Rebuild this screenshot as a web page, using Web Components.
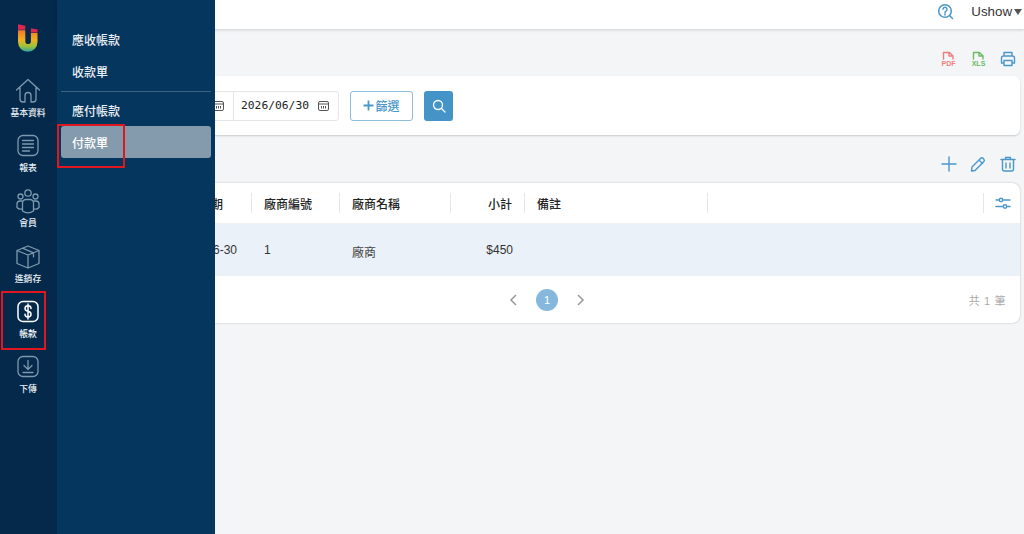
<!DOCTYPE html>
<html lang="zh-Hant"><head><meta charset="utf-8"><title>付款單</title>
<style>
html,body{margin:0;height:100%;overflow:hidden;background:#f3f5f7;font-family:"Liberation Sans","Noto Sans CJK TC",sans-serif}
</style></head><body>
<app-shell>
  <side-rail slot="rail"></side-rail>
  <sub-menu slot="sub"></sub-menu>
  <top-bar slot="main"></top-bar>
  <page-body slot="main"></page-body>
</app-shell>
<script>
const I={
 home:'<path d="M2.500 13 14 2.500 25.500 13M6 10.500V22a3 3 0 0 0 3 3h2v-6.500a3 3 0 0 1 6 0V25h2a3 3 0 0 0 3-3V10.500"/>',
 report:'<rect x="4" y="3.500" width="20" height="20" rx="5"/><path d="M8.500 8.500h11M8.500 12h11M8.500 15.500h11M8.500 19h7"/>',
 member:'<circle cx="14" cy="6" r="3.200"/><circle cx="6.500" cy="9.500" r="2.500"/><circle cx="21.500" cy="9.500" r="2.500"/><path d="M8.500 24v-8a3.500 3.500 0 0 1 3.500-3.500h4a3.500 3.500 0 0 1 3.500 3.500v8a10 10 0 0 1-11 0zM8 14H5.500A3 3 0 0 0 3 17v3.500a5 5 0 0 0 5 1.500M20 14h2.500a3 3 0 0 1 2.500 3v3.500a5 5 0 0 1-5 1.500"/>',
 box:'<path d="M14 3 25 7.500v13L14 25 3 20.500v-13zM3 7.500 14 12l11-4.500M14 12v13M8.500 5.200l11 4.600v4"/>',
 money:'<rect x="4" y="3.500" width="20" height="20" rx="5"/><path d="M17 10.500c0-1.500-1.300-2.700-3-2.700s-3 1.200-3 2.700 1.300 2.400 3 2.800 3 1.400 3 2.900-1.300 2.700-3 2.700-3-1.200-3-2.700M14 6v15"/>',
 down:'<rect x="4" y="3.500" width="20" height="20" rx="5"/><path d="M14 7.500V16M10 12.500l4 4 4-4M9 19.500h10"/>'
};
function def(name,css,html,init){
  customElements.define(name,class extends HTMLElement{
    constructor(){super();const s=this.attachShadow({mode:'open'});
      s.innerHTML='<style>'+css+'</style>'+(typeof html==='function'?html(this):html);}
    connectedCallback(){init&&init(this)}
  });
}
def('app-shell',`
:host{display:block;position:relative;width:1024px;height:534px;overflow:hidden}
.wrap{display:flex;height:100%}
.main{flex:1;min-width:0;display:flex;flex-direction:column}
`,`<div class="wrap"><slot name="rail"></slot><div class="main"><slot name="main"></slot></div></div><slot name="sub"></slot>`);

def('rail-item',`
:host{display:flex;flex-direction:column;align-items:center;height:55.200px;color:#e8eef3;font-size:8.800px;line-height:12px;font-weight:500}
svg{width:28px;height:28px;fill:none;stroke:#7e99ae;stroke-width:1.300;stroke-linecap:round;stroke-linejoin:round;margin-bottom:2px;flex:none}
:host([active]) svg{stroke:#fff;stroke-width:1.500}
:host([active]){color:#fff}
`,h=>`<svg viewBox="0 0 28 28">${I[h.getAttribute('icon')]}</svg><slot></slot>`);

def('side-rail',`
:host{display:flex;flex-direction:column;align-items:center;flex:none;width:57px;height:534px;background:#04294b;box-sizing:border-box;padding:24px 1px 0 0;position:relative}
.logo{width:22px;height:28px;margin-bottom:25px;flex:none}
.mark{position:absolute;left:1px;top:291px;width:45px;height:59px;box-sizing:border-box;border:2px solid #e0171f}
`,`<svg class="logo" viewBox="0 0 22 28"><defs><linearGradient id="g" x1="0" y1="0" x2="0" y2="1"><stop offset="0" stop-color="#f07a2c"/><stop offset=".45" stop-color="#f2b01e"/><stop offset=".75" stop-color="#9cc23a"/><stop offset="1" stop-color="#2aa6a0"/></linearGradient></defs>
<path fill="url(#g)" d="M1 6.300h7.300v11a2.800 2.800 0 0 0 5.600 0V9h6.600v9a9.750 9.750 0 0 1-19.500 0z"/><path fill="#e0264f" d="M1 .3 8.300 1.800V5.700H1zM13.900 4.300l6.600 1.200v3H13.900z"/></svg>
<rail-item icon="home">基本資料</rail-item>
<rail-item icon="report">報表</rail-item>
<rail-item icon="member">會員</rail-item>
<rail-item icon="box">進銷存</rail-item>
<rail-item icon="money" active>帳款</rail-item>
<rail-item icon="down">下傳</rail-item>
<div class="mark"></div>`);

def('menu-link',`
:host{display:flex;align-items:center;height:32px;box-sizing:border-box;padding-left:11px;border-radius:3px;color:#e8eef3;font-size:12px;font-weight:500}
:host([active]){background:#849bae;color:#fff}
`,`<slot></slot>`);

def('sub-menu',`
:host{position:absolute;left:57px;top:0;width:158px;height:534px;background:#05365d;box-sizing:border-box;padding:23px 4px 0 4px;display:flex;flex-direction:column}
hr{border:0;border-top:1px solid #3d6283;margin:4px 0 2px;height:0;width:100%}
.mark{position:absolute;left:0;top:124px;width:68px;height:44px;box-sizing:border-box;border:2px solid #e0171f}
`,`<menu-link>應收帳款</menu-link><menu-link>收款單</menu-link><hr><menu-link>應付帳款</menu-link><menu-link active>付款單</menu-link><div class="mark"></div>`);

def('top-bar',`
:host{display:flex;align-items:center;justify-content:flex-end;height:29px;flex:none;box-sizing:border-box;background:#fff;box-shadow:0 1px 3px rgba(0,0,0,.16);padding:0 2px 6px 0;font-size:13.300px;color:#333;position:relative}
svg{width:17px;height:17px;fill:none;stroke:#4a97c9;stroke-width:1.500;margin-right:17px}
i{display:inline-block;width:0;height:0;border:4px solid transparent;border-top:6px solid #555;border-bottom:0;margin-left:2px}
`,`<svg viewBox="0 0 17 17"><circle cx="8" cy="8" r="6.300"/><path d="M6 6.300a2 2 0 1 1 3 1.800c-.7.400-1 .8-1 1.600M8 11v1M12.500 12.500l3 3" stroke-linecap="round"/></svg><span>Ushow</span><i></i>`);

def('tool-icon',`
:host{display:inline-flex;width:18px;height:18px;flex:none}
svg{width:100%;height:100%;fill:none;overflow:visible;stroke:var(--c,#4a97c9);stroke-width:1.400;stroke-linecap:round;stroke-linejoin:round}
text{font:700 7px "Liberation Sans",sans-serif;fill:var(--c);stroke:none}
`,h=>{const k=h.getAttribute('k');const p={
 pdf:'<path d="M4.500 9V2.500h6L14 6v3M10 2.500V6h4"/><text x="9.500" y="16.200" text-anchor="middle">PDF</text>',
 xls:'<path d="M4.500 9V2.500h6L14 6v3M10 2.500V6h4"/><text x="9.500" y="16.200" text-anchor="middle">XLS</text>',
 print:'<path d="M5 6V2.500h8V6M4.500 13H2.500V8a2 2 0 0 1 2-2h9a2 2 0 0 1 2 2v5h-2M5 10.500h8v5H5z"/>',
 plus:'<path d="M9 2v14M2 9h14"/>',
 pen:'<path d="M3 12 11.500 3.500a2 2 0 0 1 2.800 0l.4.400a2 2 0 0 1 0 2.800L6 15.500l-3.500.500zM10 5l3.500 3.500"/>',
 trash:'<path d="M2 4.500h14M6.500 4.500V2.500h5v2M3.500 4.500V14a2 2 0 0 0 2 2h7a2 2 0 0 0 2-2V4.500M7 8v5M11 8v5"/>',
 tune:'<path d="M2 6h14M2 12.500h14"/><circle cx="7" cy="6" r="1.700" fill="#fff"/><circle cx="11" cy="12.500" r="1.700" fill="#fff"/>'
}[k];return `<svg viewBox="0 0 18 18">${p}</svg>`});

def('date-box',`
:host{display:flex;align-items:center;justify-content:space-between;height:30px;width:106px;flex:none;box-sizing:border-box;padding:0 9px 0 7px;background:#fff;border:1px solid #e3e5e8;font:11.300px "DejaVu Sans Mono",monospace;color:#222}
:host([first]){border-right:0;border-radius:3px 0 0 3px}
:host([last]){border-radius:0 3px 3px 0}
svg{width:11px;height:11px;fill:none;stroke:#555;stroke-width:1}
`,`<slot></slot><svg viewBox="0 0 11 11"><rect x=".5" y="1.500" width="10" height="9" rx="1.500"/><path d="M.5 4h10M3.500 6v2.500M5.500 6v2.500M7.500 6v2.500" /></svg>`);

def('filter-card',`
:host{display:flex;align-items:center;height:59px;box-sizing:border-box;background:#fff;border-radius:6px;box-shadow:0 1px 2px rgba(0,0,0,.18);padding-left:62px;margin-right:4px}
.f{display:inline-flex;align-items:center;justify-content:center;box-sizing:border-box;width:63px;height:30px;margin-left:11px;border:1px solid #8dbcdc;border-radius:3px;color:#4a97c9;font-size:12px;font-weight:500}
.f svg{width:11px;height:11px;stroke:#4a97c9;stroke-width:1.800;fill:none;margin-right:1px}
.s{display:flex;align-items:center;justify-content:center;width:29px;height:30px;margin-left:11px;background:#4594c7;border-radius:3px}
.s svg{width:14px;height:14px;fill:none;stroke:#fff;stroke-width:1.300;stroke-linecap:round}
`,`<date-box first>2026/06/30</date-box><date-box last>2026/06/30</date-box>
<div class="f"><svg viewBox="0 0 11 11"><path d="M5.500 .5v10M.5 5.500h10"/></svg>篩選</div>
<div class="s"><svg viewBox="0 0 14 14"><circle cx="6" cy="6" r="4.500"/><path d="M9.500 9.500l3.500 3.500"/></svg></div>`);

def('data-table',`
:host{display:block;background:#fff;border-radius:8px;box-shadow:0 0 2px rgba(0,0,0,.25);margin-right:4px;overflow:hidden;font-size:12px;color:#333}
.g{display:grid;grid-template-columns:187px 88px 111px 74px 183px 276px 36px}
.h{height:41px;box-sizing:border-box;border-bottom:1px solid #eef0f2;align-items:center}
.h>div{display:flex;align-items:center;height:20px;padding:0 12px;box-sizing:border-box;border-right:1px solid #e4e6e8;font-weight:500;color:#222}
.h>div:last-child{border:0;padding:0 0 0 10px}
.h>div:first-child{padding-right:28px}
.r{height:52px;box-sizing:border-box;padding-bottom:1px;background:#ebf1f8;align-items:center}
.r>div{padding:0 12px;white-space:nowrap}
.r>div:first-child{padding-right:15px}
.right{justify-content:flex-end;text-align:right}
.name{position:relative;top:2px;color:#444}
.p{position:relative;display:flex;align-items:center;justify-content:center;height:47px;gap:18px;padding-left:9px;color:#999}
.p svg{width:10px;height:14px;fill:none;stroke:#999;stroke-width:1.500}
.p b{display:flex;align-items:center;justify-content:center;width:22px;height:22px;border-radius:50%;background:#85b8dc;color:#fff;font-weight:400;font-size:11px}
.tot{position:absolute;right:14px;top:50%;transform:translateY(-50%);font-size:11px;color:#aaa;letter-spacing:.6px}
`,`<div class="g h"><div class="right">日期</div><div>廠商編號</div><div>廠商名稱</div><div class="right">小計</div><div>備註</div><div></div><div><tool-icon k="tune"></tool-icon></div></div>
<div class="g r"><div class="right">2026-06-30</div><div>1</div><div class="name">廠商</div><div class="right">$450</div><div></div><div></div><div></div></div>
<div class="p"><svg viewBox="0 0 10 14"><path d="M8 2 3 7l5 5"/></svg><b>1</b><svg viewBox="0 0 10 14"><path d="M2 2l5 5-5 5"/></svg><span class="tot">共 1 筆</span></div>`);

def('icon-row',`
:host{display:flex;justify-content:flex-end;align-items:center;gap:12px;padding-right:7px;height:25px}
`,`<slot></slot>`);

def('page-body',`
:host{display:flex;flex-direction:column;flex:1;padding:17px 0 0 8px;min-width:0}
.a{margin-bottom:5px}.b{margin:16px 0 7px}
`,`<icon-row class="a"><tool-icon k="pdf" style="--c:#ef7f7f"></tool-icon><tool-icon k="xls" style="--c:#6dbb63"></tool-icon><tool-icon k="print"></tool-icon></icon-row>
<filter-card></filter-card>
<icon-row class="b"><tool-icon k="plus" style="margin-right:-1px"></tool-icon><tool-icon k="pen"></tool-icon><tool-icon k="trash"></tool-icon></icon-row>
<data-table></data-table>`);
</script>
</body></html>
